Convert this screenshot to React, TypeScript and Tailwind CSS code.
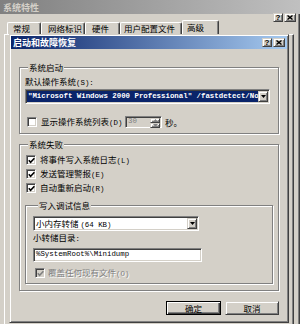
import React from "react";

const sunken =
  "border border-t-[#808080] border-l-[#808080] border-r-white border-b-white shadow-[inset_1px_1px_0_#404040,inset_-1px_-1px_0_#d4d0c8]";
const raised =
  "border border-t-[#d4d0c8] border-l-[#d4d0c8] border-r-[#404040] border-b-[#404040] shadow-[inset_1px_1px_0_#fff,inset_-1px_-1px_0_#808080]";
const etched =
  "border border-[#808080] shadow-[inset_1px_1px_0_#fff,1px_1px_0_#fff]";

function M({ children, className = "" }: { children: React.ReactNode; className?: string }) {
  return <span className={`font-['Liberation_Mono',monospace] text-[7.4px] leading-none ${className}`}>{children}</span>;
}

function Check({ checked, disabled }: { checked?: boolean; disabled?: boolean }) {
  return (
    <span
      className={`flex h-[10px] w-[10px] shrink-0 items-center justify-center ${sunken} ${
        disabled ? "bg-[#d4d0c8]" : "bg-white"
      }`}
    >
      {checked && (
        <svg width="7" height="7" viewBox="0 0 7 7">
          <path d="M0.8 3.2 L2.6 5.2 L6.4 1.2" fill="none" stroke={disabled ? "#808080" : "#000"} strokeWidth="1.6" />
        </svg>
      )}
    </span>
  );
}

function Arrow() {
  return (
    <svg width="5" height="3" viewBox="0 0 5 3">
      <path d="M0 0 H5 L2.5 3 Z" fill="#000" />
    </svg>
  );
}

function TitleBtns() {
  return (
    <div className="flex gap-[1px]">
      <div className={`flex h-[9px] w-[10px] items-center justify-center bg-[#d4d0c8] ${raised}`}>
        <span className="font-['Liberation_Sans',sans-serif] text-[8px] font-bold leading-none text-black">?</span>
      </div>
      <div className={`flex h-[9px] w-[12px] items-center justify-center bg-[#d4d0c8] ${raised}`}>
        <svg width="6" height="5" viewBox="0 0 6 5">
          <path d="M0.5 0.5 L5.5 4.5 M5.5 0.5 L0.5 4.5" stroke="#000" strokeWidth="1.4" />
        </svg>
      </div>
    </div>
  );
}

function Combo({ width, selected, children }: { width: string; selected?: boolean; children: React.ReactNode }) {
  return (
    <div className={`flex h-[15px] ${width} bg-white p-[1px] ${sunken}`}>
      <div
        className={`flex min-w-0 flex-1 items-center overflow-hidden whitespace-nowrap pl-[1px] leading-[10px] ${
          selected ? "bg-[#0a246a] text-white" : ""
        }`}
      >
        {children}
      </div>
      <div className={`flex w-[10px] shrink-0 items-center justify-center bg-[#d4d0c8] ${raised}`}>
        <Arrow />
      </div>
    </div>
  );
}

export default function App() {
  return (
    <div className="relative h-[324px] w-[300px] overflow-hidden bg-[#d4d0c8] font-['Noto_Sans_CJK_SC',sans-serif] text-[8.5px] leading-[11px] text-black shadow-[inset_-1px_0_0_#404040,inset_-2px_0_0_#808080]">
      {/* outer window title */}
      <div className="flex h-[14px] items-start bg-[linear-gradient(to_right,#808080,#c0c0c0)] pl-[3px] pt-[2px] text-[9px] font-bold text-[#d4d0c8]">
        系统特性
      </div>
      {/* tabs row */}
      <div className="flex h-[20px] items-end pl-[7px]">
        {[
          ["常规", "w-[34px] pl-[5px]"],
          ["网络标识", "w-[44px] pl-[6px]"],
          ["硬件", "w-[35px] pl-[6px]"],
          ["用户配置文件", "w-[62px] pl-[3px]"],
        ].map(([t, c]) => (
          <div
            key={t}
            className={`h-[12px] rounded-t-[2px] border-l border-t border-r border-l-white border-t-white border-r-[#404040] shadow-[inset_-1px_0_0_#808080] ${c}`}
          >
            {t}
          </div>
        ))}
        <div className="h-[14px] w-[37px] rounded-t-[2px] border-l border-t border-r border-l-white border-t-white border-r-[#404040] pl-[4px] pt-[1px] shadow-[inset_-1px_0_0_#808080]">
          高级
        </div>
        <div className="ml-auto mr-[4px] -mt-[1px] self-start">
          <TitleBtns />
        </div>
      </div>
      {/* outer tab page */}
      <div className="ml-[4px] h-[292px] w-[290px] border-l border-r border-t border-l-white border-r-[#404040] border-t-white shadow-[inset_-1px_0_0_#808080]" />

      {/* inner dialog window */}
      <div className="absolute left-[9px] top-[34px] h-[289px] w-[280px] border border-[#d4d0c8] border-b-[#404040] border-r-[#404040] bg-[#d4d0c8] p-[1px] shadow-[inset_1px_1px_0_#fff,inset_-1px_-1px_0_#808080]">
        <div className="flex h-[13px] items-center justify-between bg-[linear-gradient(to_right,#0a246a,#a6caf0)] pl-[2px] pr-[2px]">
          <span className="text-[9px] font-bold text-white">启动和故障恢复</span>
          <TitleBtns />
        </div>

        <div className="px-[8px] pt-[13px]">
          {/* 系统启动 */}
          <fieldset className={`${etched} px-[5px] pb-[5px]`}>
            <legend className="ml-[3px] bg-[#d4d0c8] px-[1px]">系统启动</legend>
            <div className="mt-[3px] h-[11px]">
              默认操作系统<M>(S):</M>
            </div>
            <div className="mt-[2px]">
              <Combo width="w-[245px]" selected>
                <M className="font-bold">"Microsoft Windows 2000 Professional" /fastdetect/No</M>
              </Combo>
            </div>
            <div className="mt-[12px] flex h-[12px] items-center">
              <span className="ml-[2px]">
                <Check />
              </span>
              <span className="ml-[4px] w-[84px]">
                显示操作系统列表<M>(D)</M>
              </span>
              <div className={`flex h-[12px] w-[37px] bg-[#d4d0c8] p-[1px] ${sunken}`}>
                <div className="flex flex-1 items-center pl-[1px]">
                  <M className="text-[#808080]">30</M>
                </div>
                <div className="flex w-[10px] flex-col">
                  <div className={`flex flex-1 items-center justify-center ${raised}`}>
                    <svg width="5" height="3" viewBox="0 0 5 3">
                      <path d="M0 3 H5 L2.5 0 Z" fill="#808080" />
                    </svg>
                  </div>
                  <div className={`flex flex-1 items-center justify-center ${raised}`}>
                    <svg width="5" height="3" viewBox="0 0 5 3">
                      <path d="M0 0 H5 L2.5 3 Z" fill="#808080" />
                    </svg>
                  </div>
                </div>
              </div>
              <span className="ml-[3px]">秒。</span>
            </div>
          </fieldset>

          {/* 系统失败 */}
          <fieldset className={`${etched} mt-[5px] px-[5px] pb-[6px]`}>
            <legend className="ml-[3px] bg-[#d4d0c8] px-[1px]">系统失败</legend>
            <div className="mt-[3px] flex flex-col">
              {[
                ["将事件写入系统日志", "(L)"],
                ["发送管理警报", "(E)"],
                ["自动重新启动", "(R)"],
              ].map(([t, k]) => (
                <div key={t} className="flex h-[14px] items-center">
                  <span className="ml-[1px]">
                    <Check checked />
                  </span>
                  <span className="ml-[4px]">
                    {t}
                    <M>{k}</M>
                  </span>
                </div>
              ))}
            </div>

            <fieldset className={`${etched} mt-[5px] pb-[4px] pl-[7px]`}>
              <legend className="ml-[5px] bg-[#d4d0c8] px-[1px]">写入调试信息</legend>
              <div className="mt-[5px]">
                <Combo width="w-[166px]">
                  <span>
                    小内存转储 <M>(64 KB)</M>
                  </span>
                </Combo>
              </div>
              <div className="mt-[1px] h-[11px]">
                小转储目录<M>:</M>
              </div>
              <div className={`mt-[5px] flex h-[14px] w-[169px] items-center bg-white pl-[2px] ${sunken}`}>
                <M>%SystemRoot%\Minidump</M>
              </div>
              <div className="mt-[5px] flex h-[12px] items-center">
                <span className="ml-[2px]">
                  <Check checked disabled />
                </span>
                <span className="ml-[3px] text-[#808080] [text-shadow:1px_1px_0_#fff]">
                  覆盖任何现有文件<M>(O)</M>
                </span>
              </div>
            </fieldset>
          </fieldset>

          {/* buttons */}
          <div className="mt-[10px] flex justify-end gap-[4px]">
            <div className="flex h-[14px] w-[55px] items-center justify-center border border-black shadow-[inset_1px_1px_0_#fff,inset_-1px_-1px_0_#404040,inset_-2px_-2px_0_#808080]">
              确定
            </div>
            <div className={`flex h-[14px] w-[54px] items-center justify-center ${raised}`}>取消</div>
          </div>
        </div>
      </div>
    </div>
  );
}
